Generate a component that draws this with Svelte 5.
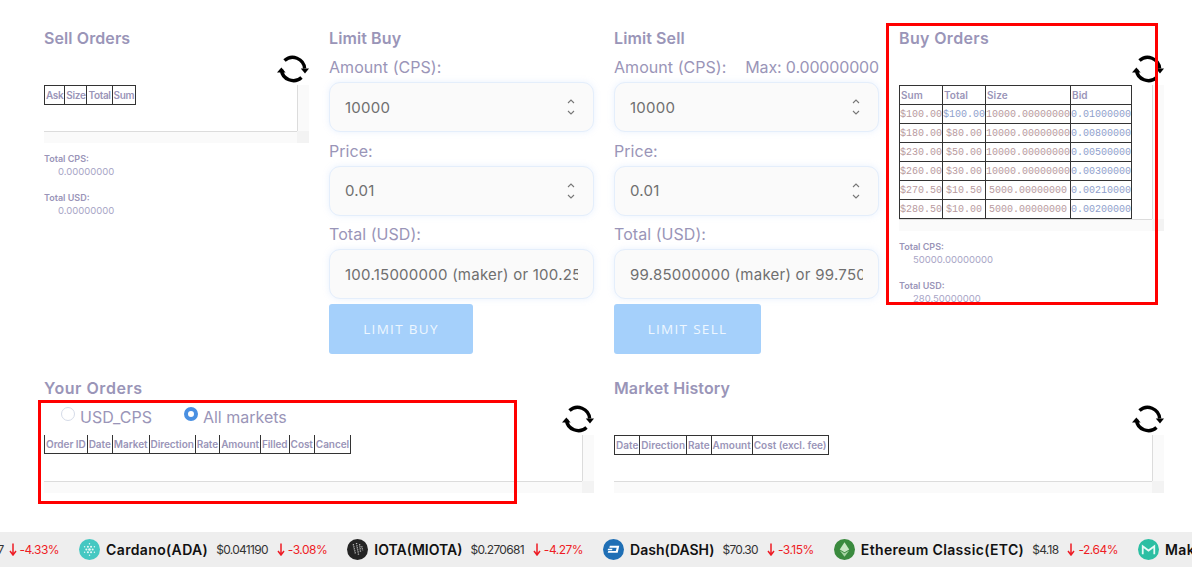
<script>
	const buyRows = [
		['$100.00', '$100.00', '10000.00000000', '0.01000000', 'up'],
		['$180.00', '$80.00', '10000.00000000', '0.00800000'],
		['$230.00', '$50.00', '10000.00000000', '0.00500000'],
		['$260.00', '$30.00', '10000.00000000', '0.00300000'],
		['$270.50', '$10.50', '5000.00000000', '0.00210000'],
		['$280.50', '$10.00', '5000.00000000', '0.00200000']
	];

	const ticker = [
		{ name: '', price: '$0.0007', change: '-4.33%', skip: true },
		{ name: 'Cardano(ADA)', price: '$0.041190', change: '-3.08%', coin: 'ada' },
		{ name: 'IOTA(MIOTA)', price: '$0.270681', change: '-4.27%', coin: 'iota', caps: true },
		{ name: 'Dash(DASH)', price: '$70.30', change: '-3.15%', coin: 'dash', caps: true },
		{ name: 'Ethereum Classic(ETC)', price: '$4.18', change: '-2.64%', coin: 'etc' },
		{ name: 'Maker(MKR)', price: '$512.20', change: '-1.90%', coin: 'mkr' }
	];

	const adaDots = [];
	for (let i = 0; i < 6; i++) {
		const a = (i * Math.PI) / 3;
		adaDots.push([10 + Math.cos(a) * 3, 10 + Math.sin(a) * 3, 1]);
		adaDots.push([10 + Math.cos(a + 0.52) * 5.4, 10 + Math.sin(a + 0.52) * 5.4, 0.7]);
	}
</script>

{#snippet refresh()}
	<svg class="refresh" width="32" height="32" viewBox="0 0 32 32" aria-hidden="true">
		<path d="M7.5 7.6 A12 12 0 0 1 27.6 15.5" fill="none" stroke="#000" stroke-width="3.4" />
		<path d="M24.5 24.4 A12 12 0 0 1 4.4 16.5" fill="none" stroke="#000" stroke-width="3.4" />
		<path d="M23.8 15.6 H32 L28 20.6 Z" fill="#000" />
		<path d="M0 19.4 H8.6 L4.4 14.4 Z" fill="#000" />
	</svg>
{/snippet}

{#snippet chevrons()}
	<svg class="spin" width="10" height="18" viewBox="0 0 10 18" aria-hidden="true">
		<path d="M2 5 L5 2 L8 5" fill="none" stroke="#777" stroke-width="1.1" />
		<path d="M2 13 L5 16 L8 13" fill="none" stroke="#777" stroke-width="1.1" />
	</svg>
{/snippet}

{#snippet coin(kind)}
	<svg class="coin" width="21" height="21" viewBox="0 0 20 20" aria-hidden="true">
		{#if kind === 'ada'}
			<circle cx="10" cy="10" r="10" fill="#45c8c2" />
			{#each adaDots as d}
				<circle cx={d[0]} cy={d[1]} r={d[2]} fill="#e2f8f6" />
			{/each}
			<circle cx="10" cy="10" r="1.3" fill="#e2f8f6" />
		{:else if kind === 'iota'}
			<circle cx="10" cy="10" r="10" fill="#242424" />
			<path d="M6 5 L8 14 M9 4 L11 15 M12 5 L13 13 M14 7 L15 11" stroke="#ccc" stroke-width="1.3" stroke-dasharray="1 1" fill="none" />
		{:else if kind === 'dash'}
			<circle cx="10" cy="10" r="10" fill="#1f6fb5" />
			<path d="M6.5 6.5 H15.5 L14 13.2 H4.5 L5 11.4 H12.2 L13 8.3 H6 Z" fill="#fff" />
			<path d="M4.8 9.2 H9 L8.6 10.6 H4.4 Z" fill="#fff" />
		{:else if kind === 'etc'}
			<circle cx="10" cy="10" r="10" fill="#3a8a3e" />
			<path d="M10 3 L14.5 10 L10 12.5 L5.5 10 Z" fill="#c9e6c4" />
			<path d="M10 13.6 L14.5 11 L10 17 L5.5 11 Z" fill="#a6d3a2" />
		{:else}
			<circle cx="10" cy="10" r="10" fill="#2bbfa3" />
			<path d="M4.5 14.5 V7 L10 11 L15.5 7 V14.5" fill="none" stroke="#e6faf6" stroke-width="1.7" />
		{/if}
	</svg>
{/snippet}

<div class="page">
	<div class="grid">
		<section class="col">
			<h3>Sell Orders</h3>
			<div class="table-wrap first">
				{@render refresh()}
				<div class="frame">
					<div class="view">
						<table class="tight">
							<thead><tr><th>Ask</th><th>Size</th><th>Total</th><th>Sum</th></tr></thead>
						</table>
					</div>
					<div class="vbar"></div>
					<div class="hbar"></div>
					<div class="corner"></div>
				</div>
			</div>
			<div class="totals">
				<h6>Total CPS:</h6>
				<p>0.00000000</p>
				<h6>Total USD:</h6>
				<p>0.00000000</p>
			</div>
		</section>

		<section class="col">
			<h3>Limit Buy</h3>
			<div class="label"><span>Amount (CPS):</span></div>
			<div class="field"><input value="10000" />{@render chevrons()}</div>
			<div class="label"><span>Price:</span></div>
			<div class="field"><input value="0.01" />{@render chevrons()}</div>
			<div class="label"><span>Total (USD):</span></div>
			<div class="field"><input value="100.15000000 (maker) or 100.25000000 (taker)" /></div>
			<button class="buy">LIMIT BUY</button>
		</section>

		<section class="col">
			<h3>Limit Sell</h3>
			<div class="label"><span>Amount (CPS):</span><span class="max">Max: 0.00000000</span></div>
			<div class="field"><input value="10000" />{@render chevrons()}</div>
			<div class="label"><span>Price:</span></div>
			<div class="field"><input value="0.01" />{@render chevrons()}</div>
			<div class="label"><span>Total (USD):</span></div>
			<div class="field"><input value="99.85000000 (maker) or 99.75000000 (taker)" /></div>
			<button class="sell">LIMIT SELL</button>
		</section>

		<section class="col">
			<h3 class="wide">Buy Orders</h3>
			<div class="table-wrap first">
				{@render refresh()}
				<div class="frame">
					<div class="view">
						<table>
							<thead><tr><th>Sum</th><th>Total</th><th>Size</th><th>Bid</th></tr></thead>
							<tbody>
								{#each buyRows as row}
									<tr>
										<td class="red">{row[0]}</td>
										<td class={row[4] ? 'blue' : 'red'}>{row[1]}</td>
										<td class="red">{row[2]}</td>
										<td class="blue">{row[3]}</td>
									</tr>
								{/each}
							</tbody>
						</table>
					</div>
					<div class="vbar"></div>
					<div class="hbar"></div>
					<div class="corner"></div>
				</div>
			</div>
			<div class="totals">
				<h6>Total CPS:</h6>
				<p>50000.00000000</p>
				<h6>Total USD:</h6>
				<p>280.50000000</p>
			</div>
		</section>
	</div>

	<div class="lower">
		<section class="col">
			<h3 class="wider">Your Orders</h3>
			<div class="radios">
				<label><input type="radio" name="market" />USD_CPS</label>
				<label><input type="radio" name="market" checked />All markets</label>
			</div>
			<div class="table-wrap">
				{@render refresh()}
				<div class="frame">
					<div class="view">
						<table class="open-top">
							<thead>
								<tr>
									<th>Order ID</th><th>Date</th><th>Market</th><th>Direction</th><th>Rate</th><th>Amount</th><th>Filled</th><th>Cost</th><th>Cancel</th>
								</tr>
							</thead>
						</table>
					</div>
					<div class="vbar"></div>
					<div class="hbar"></div>
					<div class="corner"></div>
				</div>
			</div>
		</section>

		<section class="col">
			<h3>Market History</h3>
			<div class="spacer"></div>
			<div class="table-wrap">
				{@render refresh()}
				<div class="frame">
					<div class="view">
						<table>
							<thead>
								<tr><th>Date</th><th>Direction</th><th>Rate</th><th>Amount</th><th>Cost (excl. fee)</th></tr>
							</thead>
						</table>
					</div>
					<div class="vbar"></div>
					<div class="hbar"></div>
					<div class="corner"></div>
				</div>
			</div>
		</section>
	</div>

	<div class="ticker">
		{#each ticker as t}
			<div class="tick" class:skip={t.skip}>
				{#if t.coin}{@render coin(t.coin)}{/if}
				{#if t.name}<strong class:caps={t.caps}>{t.name}</strong>{/if}
				<span class="price">{t.price}</span>
				<svg class="arrow" width="8" height="13" viewBox="0 0 8 13" aria-hidden="true">
					<path d="M4 0.5 V11 M1 8 L4 12 L7 8" fill="none" stroke="#ee1c25" stroke-width="1.5" />
				</svg>
				<span class="change">{t.change}</span>
			</div>
		{/each}
	</div>

	<!-- annotation boxes drawn over the page -->
	<div class="mark mark-buy"></div>
	<div class="mark mark-orders"></div>
</div>

<style>
	:global(body) {
		margin: 0;
		background: #fff;
		overflow: hidden;
	}

	.page {
		position: relative;
		width: 1192px;
		height: 567px;
		overflow: hidden;
		font-family: Inter, 'Noto Sans', sans-serif;
		color: #9a95b8;
	}

	.grid {
		display: grid;
		grid-template-columns: repeat(4, 265px);
		column-gap: 20px;
		padding: 28px 0 0 44px;
		height: 350px;
		box-sizing: border-box;
	}

	.lower {
		display: grid;
		grid-template-columns: repeat(2, 550px);
		column-gap: 20px;
		padding: 28px 0 0 44px;
		height: 182px;
		box-sizing: border-box;
	}

	.col {
		min-width: 0;
	}

	h3 {
		margin: 0;
		font-size: 16px;
		line-height: 20px;
		font-weight: 600;
		color: #9a95b8;
		letter-spacing: 0.1px;
	}

	h3.wide {
		letter-spacing: 0.35px;
	}

	h3.wider {
		letter-spacing: 0.55px;
	}

	.label {
		display: flex;
		justify-content: space-between;
		font-size: 16px;
		line-height: 24px;
		letter-spacing: 0.05px;
		margin-bottom: 3px;
		margin-top: 6.5px;
	}

	.max {
		letter-spacing: -0.15px;
	}

	h3 + .label {
		margin-top: 7px;
	}

	.field {
		display: flex;
		align-items: center;
		height: 50px;
		box-sizing: border-box;
		padding: 0 15px;
		background: #fafafa;
		border: 1px solid #e4eefb;
		border-radius: 11px;
		box-shadow: 0 0 6px rgba(170, 205, 250, 0.25);
	}

	.field input {
		flex: 1;
		min-width: 0;
		border: 0;
		padding: 0;
		background: transparent;
		font: inherit;
		font-size: 15px;
		letter-spacing: 0.25px;
		color: #6f6f6f;
		outline: none;
	}

	.spin {
		flex: none;
		margin-right: 2px;
	}

	button {
		display: block;
		height: 50px;
		margin-top: 5px;
		border: 0;
		border-radius: 3px;
		background: #a5d0fb;
		color: #eef7ff;
		font-family: 'Open Sans', sans-serif;
		font-size: 13.5px;
		letter-spacing: 1.3px;
	}

	.buy {
		width: 144px;
	}

	.sell {
		width: 147px;
	}

	.table-wrap {
		position: relative;
	}

	.table-wrap.first {
		margin-top: 37px;
	}

	.refresh {
		position: absolute;
		right: 0;
		top: -32px;
	}

	.frame {
		display: grid;
		grid-template-columns: 1fr 12px;
		grid-template-rows: auto 12px;
	}

	.view {
		min-height: 46px;
		overflow: hidden;
		min-width: 0;
	}

	.vbar {
		background: #fafafa;
		border-left: 1px solid #dcdcdc;
	}

	.hbar {
		background: #fafafa;
		border-top: 1px solid #dcdcdc;
	}

	.corner {
		background: #f3f3f3;
	}

	table {
		border-collapse: collapse;
		font-size: 10px;
	}

	.tight th {
		letter-spacing: -0.35px;
	}

	.open-top {
		margin-top: -1px;
	}

	.open-top th {
		letter-spacing: -0.05px;
	}

	th,
	td {
		border: 1px solid #333;
		height: 19px;
		padding: 0 1px;
		text-align: left;
		white-space: nowrap;
		box-sizing: border-box;
	}

	th {
		font-weight: 600;
		color: #9a95b8;
	}

	td {
		font-family: 'Liberation Mono', monospace;
		text-align: center;
		padding: 0;
	}

	.red {
		color: #b89a9e;
	}

	.blue {
		color: #8f9fcc;
	}

	.totals {
		margin-top: 9px;
		font-size: 9px;
	}

	.totals h6 {
		margin: 0;
		font-size: 9px;
		line-height: 13px;
		font-weight: 600;
		color: #9a95b8;
	}

	.totals p {
		margin: 0 0 13px 14px;
		font-size: 9.5px;
		line-height: 13px;
		color: #a8a5c6;
	}

	.radios {
		display: flex;
		gap: 32px;
		padding-left: 17px;
		height: 27px;
		font-size: 16px;
		align-items: center;
		margin-top: 5px;
		margin-bottom: 5px;
	}

	.radios label {
		display: flex;
		align-items: center;
		gap: 5px;
	}

	.radios input {
		appearance: none;
		box-sizing: border-box;
		margin: 0 0 6px;
		width: 14px;
		height: 14px;
		border-radius: 50%;
		border: 1px solid #d5dbe8;
		background: #fff;
	}

	.radios input:checked {
		border: 4.5px solid #4a90e2;
	}

	.spacer {
		height: 37px;
	}

	.ticker {
		display: flex;
		align-items: center;
		height: 35px;
		background: #eee;
		white-space: nowrap;
		overflow: hidden;
	}

	.tick {
		display: flex;
		flex: none;
		align-items: center;
		margin-right: 20px;
		color: #222;
	}

	.tick.skip {
		margin-left: -39px;
	}

	.tick.skip .price {
		margin-right: 5px;
	}

	.coin {
		flex: none;
		margin-right: 6px;
	}

	.tick strong {
		font-size: 14px;
		font-weight: 600;
		letter-spacing: 0.35px;
		color: #111;
		margin-right: 8px;
	}

	.tick strong.caps {
		letter-spacing: 0;
	}

	.price {
		font-size: 12px;
		letter-spacing: -0.7px;
		color: #333;
		margin-right: 9px;
	}

	.arrow {
		margin-right: 3px;
	}

	.change {
		font-size: 12px;
		letter-spacing: -0.5px;
		color: #ee1c25;
	}

	.mark {
		position: absolute;
		border: 3px solid #f00;
		box-sizing: border-box;
		pointer-events: none;
	}

	.mark-buy {
		left: 886px;
		top: 23px;
		width: 272px;
		height: 282px;
	}

	.mark-orders {
		left: 38px;
		top: 400px;
		width: 479px;
		height: 104px;
	}
</style>
